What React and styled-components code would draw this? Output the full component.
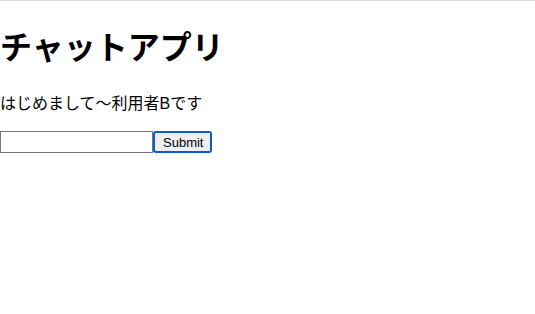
import React from "react";
import styled, { createGlobalStyle } from "styled-components";

const GlobalStyle = createGlobalStyle`
  body {
    margin: 0;
    font-family: "Liberation Sans", "Noto Sans CJK JP", sans-serif;
    background: #fff;
    color: #000;
  }
`;

const Page = styled.div`
  border-top: 1px solid #d9d9d9;
`;

const Title = styled.h1`
  font-size: 32px;
  font-weight: bold;
  margin: 21px 0 22px;
`;

const Greeting = styled.p`
  font-size: 16px;
  margin: 16px 0 17px;
`;

const Form = styled.form`
  display: flex;
  align-items: center;
`;

const TextInput = styled.input`
  width: 149px;
  height: 18px;
  padding: 1px;
  border: 1px solid #767676;
  font-size: 13px;
  font-family: "Liberation Sans", sans-serif;
  box-sizing: content-box;
`;

const SubmitButton = styled.button`
  font-family: "Liberation Sans", sans-serif;
  font-size: 13px;
  height: 22px;
  padding: 0 7px 0 8px;
  border: 2px solid #0b5bd3;
  border-radius: 3px;
  background: #efefef;
  color: #000;
`;

export default function App() {
  return (
    <Page>
      <GlobalStyle />
      <Title>チャットアプリ</Title>
      <Greeting>はじめまして〜利用者Bです</Greeting>
      <Form onSubmit={(e) => e.preventDefault()}>
        <TextInput type="text" />
        <SubmitButton type="submit">Submit</SubmitButton>
      </Form>
    </Page>
  );
}
